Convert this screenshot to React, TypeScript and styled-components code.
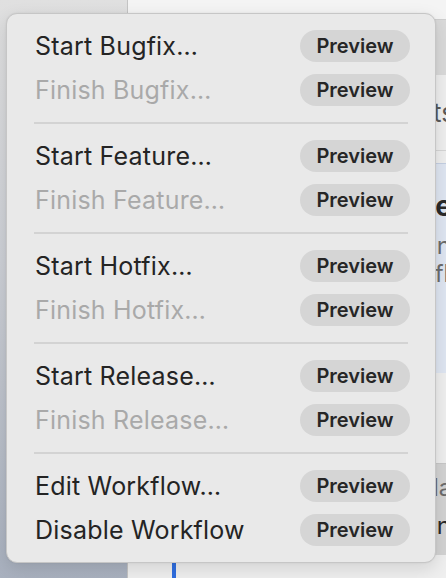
import React from "react";
import styled, { createGlobalStyle } from "styled-components";

const Global = createGlobalStyle`
  html, body { margin: 0; padding: 0; }
  body {
    width: 446px; height: 578px; overflow: hidden;
    font-family: Inter, "Noto Sans", "Liberation Sans", sans-serif;
  }
`;

const Screen = styled.div`
  position: relative;
  width: 446px;
  height: 578px;
  display: flex;
  overflow: hidden;
`;

const Sidebar = styled.div`
  width: 127px;
  flex-shrink: 0;
  background: linear-gradient(180deg, #e0e0e0 0%, #cdd0d6 45%, #a9b1bf 100%);
  border-right: 1px solid #c4c4c4;
`;

const Main = styled.div`
  flex: 1;
  display: flex;
  flex-direction: column;
  background: #efefef;
  overflow: hidden;
`;

const TitleStrip = styled.div`
  height: 19px;
  background: #f4f4f4;
  border-bottom: 1px solid #cfcfcf;
`;

const TabStrip = styled.div`
  height: 55px;
  background: #dadada;
`;

const Heading = styled.div`
  height: 75px;
  display: flex;
  align-items: center;
  justify-content: flex-end;
  margin-right: -9px;
  border-bottom: 1px solid #d6d6d6;
  font-size: 26px;
  color: #5a5a5a;
`;

const Gap = styled.div<{ h: number }>`
  height: ${(p) => p.h}px;
  flex-shrink: 0;
`;

const Card = styled.div<{ tone: "blue" | "gray"; h: number }>`
  height: ${(p) => p.h}px;
  flex-shrink: 0;
  display: flex;
  flex-direction: column;
  align-items: flex-end;
  background: ${(p) => (p.tone === "blue" ? "#dfe6f2" : "#d3d3d3")};
  border-top: 1px solid ${(p) => (p.tone === "blue" ? "#c5d0e3" : "#c8c8c8")};
`;

const CardLine = styled.div<{ strong?: boolean; dark?: boolean; top: number; overhang: number }>`
  margin-top: ${(p) => p.top}px;
  margin-right: -${(p) => p.overhang}px;
  white-space: nowrap;
  font-size: ${(p) => (p.strong ? 28 : 24)}px;
  font-weight: ${(p) => (p.strong ? 700 : 400)};
  color: ${(p) => (p.strong || p.dark ? "#2a2a2a" : "#6c6c6c")};
  line-height: 1;
`;

const Footer = styled.div`
  flex: 1;
  display: flex;
`;

const FocusBar = styled.div`
  width: 4px;
  margin-left: 44px;
  background: #2f6ee0;
`;

const Menu = styled.div`
  position: absolute;
  left: 6px;
  top: 13px;
  width: 430px;
  box-sizing: border-box;
  padding: 10px 0 10px;
  background: #e9e9e9;
  border: 1px solid #c6c6c6;
  border-radius: 11px;
  box-shadow: 0 6px 18px rgba(0, 0, 0, 0.12), 0 0 2px rgba(0, 0, 0, 0.08);
  display: flex;
  flex-direction: column;
`;

const Item = styled.div<{ disabled?: boolean }>`
  height: 44px;
  display: flex;
  align-items: center;
  justify-content: space-between;
  padding: 0 25px 0 28px;
  font-size: 25px;
  letter-spacing: 0.2px;
  color: ${(p) => (p.disabled ? "#a9a9a9" : "#242424")};
`;

const Pill = styled.span`
  width: 110px;
  height: 32px;
  border-radius: 16px;
  background: #d5d5d5;
  display: flex;
  align-items: center;
  justify-content: center;
  font-size: 20px;
  font-weight: 600;
  letter-spacing: 0;
  color: #262626;
`;

const Separator = styled.div`
  height: 22px;
  display: flex;
  align-items: center;
  padding: 0 27px 0 27px;
  &::after {
    content: "";
    flex: 1;
    height: 2px;
    background: #d3d3d3;
  }
`;

type Entry = { label: string; disabled?: boolean } | "sep";

const entries: Entry[] = [
  { label: "Start Bugfix…" },
  { label: "Finish Bugfix…", disabled: true },
  "sep",
  { label: "Start Feature…" },
  { label: "Finish Feature…", disabled: true },
  "sep",
  { label: "Start Hotfix…" },
  { label: "Finish Hotfix…", disabled: true },
  "sep",
  { label: "Start Release…" },
  { label: "Finish Release…", disabled: true },
  "sep",
  { label: "Edit Workflow…" },
  { label: "Disable Workflow" },
];

export default function App() {
  return (
    <>
      <Global />
      <Screen>
        <Sidebar />
        <Main>
          <TitleStrip />
          <TabStrip />
          <Heading>Commits</Heading>
          <Gap h={12} />
          <Card tone="blue" h={209}>
            <CardLine strong top={28} overhang={6}>Feature</CardLine>
            <CardLine top={14} overhang={5}>origin</CardLine>
            <CardLine top={4} overhang={37}>gitflow</CardLine>
          </Card>
          <Gap h={90} />
          <Card tone="gray" h={91}>
            <CardLine top={12} overhang={34}>Stashed in place</CardLine>
            <CardLine dark top={14} overhang={5}>main</CardLine>
          </Card>
          <Footer>
            <FocusBar />
          </Footer>
        </Main>
        <Menu>
          {entries.map((e, i) =>
            e === "sep" ? (
              <Separator key={i} />
            ) : (
              <Item key={i} disabled={e.disabled}>
                <span>{e.label}</span>
                <Pill>Preview</Pill>
              </Item>
            )
          )}
        </Menu>
      </Screen>
    </>
  );
}
